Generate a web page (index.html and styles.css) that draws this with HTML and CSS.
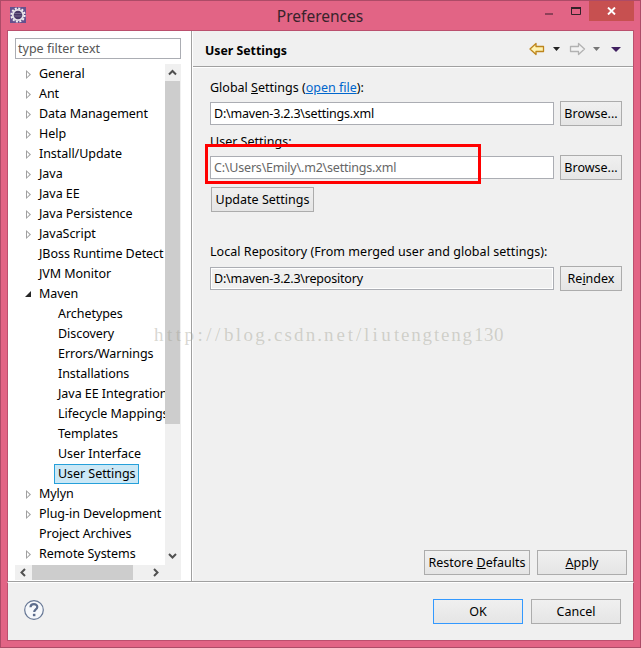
FILE: index.html
```html
<!DOCTYPE html>
<html lang="en">
<head>
<meta charset="utf-8">
<title>Preferences</title>
<link rel="stylesheet" href="styles.css">
</head>
<body>
<div class="window">
  <header class="titlebar">
    <svg class="app-icon" width="16" height="16" viewBox="0 0 16 16"><rect width="16" height="16" fill="#65508d"/><circle cx="8" cy="8" r="6.6" fill="none" stroke="#f3f0f2" stroke-width="2" stroke-dasharray="2 1.46"/><circle cx="8" cy="8" r="5.2" fill="#493766" stroke="#e5e2e8" stroke-width="1.8"/><path d="M4 6.5h8M4 9h8" stroke="#74678c"/></svg>
    <h1 class="title">Preferences</h1>
    <div class="controls">
      <svg width="44" height="20" viewBox="0 0 44 20"><path d="M0 12h8v2H0z" fill="#8e4058"/><path d="M26.500 6.500h9v7h-9z" fill="none" stroke="#332329"/><path d="M26 6h10v2H26z" fill="#332329"/></svg>
      <span class="close"><svg width="9" height="8" viewBox="0 0 9 8"><path d="M1 .5l7 7M8 .5l-7 7" stroke="#fff" stroke-width="1.9"/></svg></span>
    </div>
  </header>
  <main class="body">
    <aside class="side">
      <div class="filter"><span>type filter text</span></div>
      <div class="tree-wrap">
        <ul class="tree">
          <li class="closed">General</li>
          <li class="closed">Ant</li>
          <li class="closed">Data Management</li>
          <li class="closed">Help</li>
          <li class="closed">Install/Update</li>
          <li class="closed">Java</li>
          <li class="closed">Java EE</li>
          <li class="closed">Java Persistence</li>
          <li class="closed">JavaScript</li>
          <li>JBoss Runtime Detect</li>
          <li>JVM Monitor</li>
          <li class="open">Maven</li>
          <li class="child">Archetypes</li>
          <li class="child">Discovery</li>
          <li class="child">Errors/Warnings</li>
          <li class="child">Installations</li>
          <li class="child">Java EE Integration</li>
          <li class="child">Lifecycle Mappings</li>
          <li class="child">Templates</li>
          <li class="child">User Interface</li>
          <li class="child"><span class="selected">User Settings</span></li>
          <li class="closed">Mylyn</li>
          <li class="closed">Plug-in Development</li>
          <li>Project Archives</li>
          <li class="closed">Remote Systems</li>
        </ul>
        <div class="vscroll">
          <svg width="16" height="17" viewBox="0 0 16 17"><path d="M4 10.500l3.500-3.500 3.500 3.500" fill="none" stroke="#505050" stroke-width="2"/></svg>
          <div class="vthumb"></div>
          <svg class="down" width="16" height="17" viewBox="0 0 16 17"><path d="M4 6l3.500 3.500L11 6" fill="none" stroke="#505050" stroke-width="2"/></svg>
        </div>
      </div>
      <div class="hscroll">
        <svg width="17" height="15" viewBox="0 0 17 15"><path d="M10 4L6.500 7.500l3.500 3.500" fill="none" stroke="#505050" stroke-width="2"/></svg>
        <div class="hthumb"></div>
        <svg class="right" width="17" height="15" viewBox="0 0 17 15"><path d="M6 4l3.500 3.500L6 11" fill="none" stroke="#505050" stroke-width="2"/></svg>
      </div>
    </aside>
    <section class="page">
      <div class="page-head">
        <h2>User Settings</h2>
        <svg class="nav" width="93" height="14" viewBox="0 0 93 14">
          <path d="M1 7l6-5.500v3h7.500v5H7v3z" fill="#fff3b0" stroke="#bd851d" stroke-width="1.300" stroke-linejoin="round"/>
          <path d="M24 5h7l-3.500 4z" fill="#222"/>
          <path d="M55.500 7l-6-5.500v3H41.500v5h8v3z" fill="#f3f3f3" stroke="#b2b2b2" stroke-width="1.300" stroke-linejoin="round"/>
          <path d="M64 5h7l-3.500 4z" fill="#777"/>
          <path d="M82 5h10l-5 5z" fill="#402060"/>
        </svg>
      </div>
      <div class="form">
        <p class="label">Global <u>S</u>ettings (<a>open file</a>):</p>
        <div class="row"><div class="input">D:\maven-3.2.3\settings.xml</div><div class="button">Browse...</div></div>
        <p class="label second">User Settings:</p>
        <div class="row marked"><div class="input hint">C:\Users\Emily\.m2\settings.xml</div><div class="button">Browse...</div><div class="marker"></div></div>
        <div class="button update">Update Settings</div>
        <p class="label local">Local Repository (From merged user and global settings):</p>
        <div class="row"><div class="input readonly">D:\maven-3.2.3\repository</div><div class="button">Re<u>i</u>ndex</div></div>
      </div>
      <div class="actions"><div class="button restore">Restore <u>D</u>efaults</div><div class="button wide"><u>A</u>pply</div></div>
    </section>
  </main>
  <footer class="foot">
    <svg class="help" width="20" height="20" viewBox="0 0 20 20"><circle cx="10" cy="10" r="9.300" fill="#f6f8fb" stroke="#667795" stroke-width="1.200"/><path d="M6.500 7.200C6.700 3.200 13.300 3.300 13.300 7c0 2.500-3.100 2.300-3.100 5" fill="none" stroke="#5c6c8c" stroke-width="2.200"/><path d="M8.900 13.800h2.500v2.400H8.900z" fill="#5c6c8c"/></svg>
    <div class="button wide primary">OK</div>
    <div class="button wide">Cancel</div>
  </footer>
  <div class="watermark"><span class="w-scheme">http://</span><span class="w-blog">blog.</span><span class="w-csdn">csdn.</span><span class="w-net">net/</span><span class="w-liu">liu</span><span class="w-teng">tengteng</span><span class="w-num">130</span></div>
</div>
</body>
</html>
```
FILE: styles.css
```css
* { box-sizing: border-box; }
body { margin: 0; font: 12.5px/20px "Noto Sans", "Open Sans", sans-serif; color: #000; overflow: hidden; }
h1, h2, p, ul { margin: 0; padding: 0; }
svg { display: block; flex: none; }
.window { position: relative; width: 641px; height: 648px; background: #e26485; border: 1px solid #ad4b67; padding: 0 6px 6px; display: flex; flex-direction: column; }
.titlebar { height: 29px; flex: none; display: flex; }
.app-icon { margin: 6px 0 0 3px; }
.title { flex: 1; text-align: center; font-size: 15.5px; font-weight: 400; line-height: 30px; color: #38232b; padding-left: 69px; }
.controls { display: flex; width: 89px; }
.close { width: 45px; height: 20px; background: #c75050; display: flex; align-items: center; justify-content: center; flex: none; }
.body { height: 552px; display: flex; border: 1px solid #bb506e; border-bottom: 1px solid #a0a0a0; flex: none; background: #f0f0f0; }
.side { width: 184px; border-right: 1px solid #a0a0a0; background: #fff; padding: 7px 0 0 7px; flex: none; }
.filter { width: 166px; height: 21px; border: 1px solid #abadb3; line-height: 20px; padding-left: 2px; color: #555; margin-bottom: 5px; }
.tree-wrap { display: flex; height: 501px; width: 166px; }
.tree { width: 150px; list-style: none; overflow: hidden; white-space: nowrap; flex: none; letter-spacing: -.05px; }
.tree li { height: 20px; line-height: 20px; padding-left: 24px; position: relative; }
.tree .child { padding-left: 43px; }
.closed::before { content: ""; position: absolute; left: 11px; top: 6px; width: 5px; height: 9px; background: #a0a0a0; clip-path: polygon(0 0, 100% 50%, 0 100%, 0 0, 1px 2px, 1px 7px, 3.500px 50%, 1px 2px); }
.open::before { content: ""; position: absolute; left: 10px; top: 7px; border-left: 6px solid transparent; border-bottom: 6px solid #262626; }
.selected { display: block; height: 20px; line-height: 18px; margin-left: -4px; width: 85px; padding-left: 3px; border: 1px solid #26a0da; background: #cbe8f6; }
.vscroll { width: 16px; background: #f0f0f0; display: flex; flex-direction: column; }
.vthumb { width: 15px; height: 343px; background: #cdcdcd; }
.down { margin-top: auto; }
.hscroll { width: 166px; height: 15px; background: #f0f0f0; display: flex; }
.hthumb { width: 101px; background: #cdcdcd; }
.right { margin-left: 15px; }
.page { flex: 1; border-left: 1px solid #fff; display: flex; flex-direction: column; }
.page-head { height: 36px; border-bottom: 1px solid #a0a0a0; box-shadow: 0 1px #fff; display: flex; justify-content: space-between; padding: 0 11px 0 12px; }
.page-head h2 { font-size: 12.3px; line-height: 40px; height: 35px; font-weight: 700; }
.nav { margin-top: 11px; }
.form { padding: 10px 10px 0 17px; }
.label { height: 20px; line-height: 22px; white-space: nowrap; }
.label a { color: #0066cc; text-decoration: underline; }
.row { display: flex; gap: 6px; align-items: center; height: 25px; margin-top: 4px; position: relative; }
.input { width: 344px; height: 23px; line-height: 21px; padding-left: 3px; border: 1px solid #abadb3; background: #fff; letter-spacing: -.2px; }
.hint { color: #666; }
.readonly { background: #f0f0f0; box-shadow: inset 0 0 0 1px #fff; }
.button { width: 62px; height: 25px; line-height: 23px; border: 1px solid #acacac; background: linear-gradient(#f0f0f0, #e5e5e5); text-align: center; white-space: nowrap; }
.second { margin-top: 5px; }
.local { line-height: 20px; letter-spacing: .04px; }
.marker { position: absolute; left: -5px; top: -11px; width: 276px; height: 40px; border: 3px solid #f00; }
.update { width: 103px; margin: 7px 0 30px 1px; }
.actions { margin-top: auto; padding: 0 6px 6px 0; display: flex; justify-content: flex-end; gap: 7px; }
.restore { width: 106px; }
.wide { width: 90px; }
.primary { border-color: #3399ff; }
.foot { flex: 1; background: #f0f0f0; border: 1px solid #bb506e; border-top: 1px solid #fff; display: flex; gap: 8px; padding: 16px 12px 0 16px; }
.help { margin-right: auto; margin-top: 1px; }
.watermark { position: absolute; left: 153px; top: 324px; display: flex; white-space: nowrap; font: 19px/20px "Liberation Serif", serif; color: rgba(160, 160, 145, .42); pointer-events: none; }
.w-scheme { width: 70px; letter-spacing: 3.5px; }
.w-blog { width: 50px; letter-spacing: 2.3px; }
.w-csdn { width: 50px; letter-spacing: 2.1px; }
.w-net { width: 40px; letter-spacing: 2.9px; }
.w-liu { width: 30px; letter-spacing: 3.3px; }
.w-teng { width: 80px; letter-spacing: 1.8px; }
.w-num { width: 30px; letter-spacing: .5px; }
```
